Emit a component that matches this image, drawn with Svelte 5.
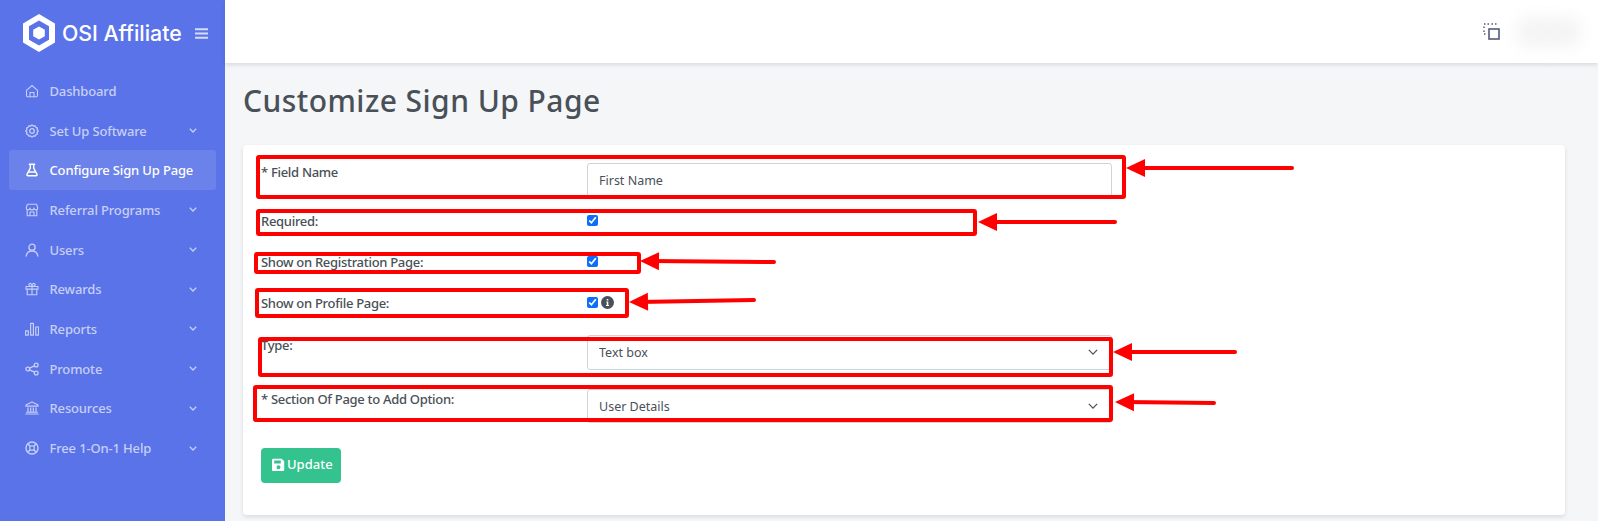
<script>
  const nav = [
    { label: "Dashboard", icon: "home" },
    { label: "Set Up Software", icon: "gear", more: true },
    { label: "Configure Sign Up Page", icon: "flask", active: true },
    { label: "Referral Programs", icon: "store", more: true },
    { label: "Users", icon: "user", more: true },
    { label: "Rewards", icon: "gift", more: true },
    { label: "Reports", icon: "bars", more: true },
    { label: "Promote", icon: "share", more: true },
    { label: "Resources", icon: "bank", more: true },
    { label: "Free 1-On-1 Help", icon: "help", more: true },
  ];

  // hand-placed annotations from the screenshot: x, y, w, h
  const boxes = [
    [258, 157, 866, 40],
    [258, 211, 717, 23],
    [256, 254, 383, 18],
    [257, 290, 370, 26],
    [260, 339, 851, 36],
    [255, 387, 856, 33],
  ];
  // tail x, tail y, tip x, tip y
  const arrows = [
    [1292, 168, 1126, 168],
    [1115, 222, 978, 222],
    [774, 262, 640, 261],
    [754, 300, 629, 302],
    [1235, 352, 1113, 352],
    [1214, 403, 1115, 402],
  ];

  function arrowHead([x1, y1, x2, y2]) {
    const len = Math.hypot(x2 - x1, y2 - y1);
    const ux = (x1 - x2) / len;
    const uy = (y1 - y2) / len;
    const bx = x2 + ux * 19;
    const by = y2 + uy * 19;
    return `${x2},${y2} ${bx - uy * 9},${by + ux * 9} ${bx + uy * 9},${by - ux * 9}`;
  }
</script>

<div class="layout">
  <aside class="sidebar">
    <div class="brand">
      <svg class="logo" viewBox="0 0 32 38" width="32" height="38">
        <path fill-rule="evenodd" d="M16 0 32 9.500v19L16 38 0 28.500v-19zM16 6.500 6 12.300v13.400l10 5.800 10-5.800V12.300z" fill="#fff" />
        <path d="M16 12.500l5.800 3.300v6.400L16 25.500l-5.800-3.300v-6.400z" fill="#fff" />
      </svg>
      <span class="brand-name">OSI Affiliate</span>
      <svg class="burger" viewBox="0 0 13 11" width="13" height="11">
        <path d="M0 1.200h13M0 5.500h13M0 9.800h13" stroke="#d5dcfa" stroke-width="2" />
      </svg>
    </div>
    <nav>
      {#each nav as item}
        <div class="nav-item" class:active={item.active}>
          <svg class="nav-icon" viewBox="0 0 14 14" width="14" height="14" fill="none" stroke="currentColor" stroke-width="1.100" stroke-linejoin="round" stroke-linecap="round">
            {#if item.icon === "home"}
              <path d="M1.500 6.300 7 1.500l5.500 4.800v5.200a1.200 1.200 0 0 1-1.200 1.200H2.700a1.200 1.200 0 0 1-1.200-1.200z" />
              <path d="M5 12.700V8.500h4v4.200" />
            {:else if item.icon === "gear"}
              <path d="M7 1l1.400 1 1.700-.2.800 1.500 1.500.8-.2 1.700 1 1.200-1 1.200.2 1.700-1.500.8-.8 1.500-1.700-.2L7 13l-1.400-1-1.700.2-.8-1.500-1.500-.8.2-1.700L.8 7l1-1.200-.2-1.700 1.500-.8.8-1.500 1.700.2z" stroke-width="1.300" />
              <circle cx="7" cy="7" r="2.300" stroke-width="1.300" />
            {:else if item.icon === "flask"}
              <path d="M4.300 1.200h5.400M5.300 1.200v4L2 11.400a1 1 0 0 0 .9 1.400h8.200a1 1 0 0 0 .9-1.400L8.700 5.200v-4" stroke-width="1.400" />
              <path d="M3.600 9h6.800" stroke-width="1.400" />
            {:else if item.icon === "store"}
              <path d="M1.200 5 2.300 1.300h9.400L12.800 5a1.900 1.900 0 0 1-3.800 0 2 2 0 0 1-4 0A1.900 1.900 0 0 1 1.200 5z" />
              <path d="M2.200 6.800v6h9.600v-6M5 12.800V9h4v3.800" />
            {:else if item.icon === "user"}
              <circle cx="7" cy="4.300" r="3.100" stroke-width="1.300" />
              <path d="M1.200 13c.4-3 2.800-5 5.800-5s5.400 2 5.800 5" stroke-width="1.300" />
            {:else if item.icon === "gift"}
              <path d="M1 4.500h12v2.600H1zM2.200 7.100v5.700h9.600V7.100M7 4.500v8.300" />
              <path d="M7 4.500C5.500 4.500 3.800 3.800 3.800 2.500 3.800 1.500 5 1 5.800 1.500 6.600 2 7 3.500 7 4.500c0-1 .4-2.500 1.200-3 .8-.5 2 0 2 1 0 1.300-1.700 2-3.200 2z" />
            {:else if item.icon === "bars"}
              <path d="M.5 8.800h2.800v4.300H.5zM5.600 1.300h2.800v11.800H5.600zM10.700 5h2.800v8.100h-2.800z" stroke-width="1.200" />
            {:else if item.icon === "share"}
              <circle cx="2.800" cy="7" r="1.900" stroke-width="1.300" />
              <circle cx="11.200" cy="3" r="1.900" stroke-width="1.300" />
              <circle cx="11.200" cy="11" r="1.900" stroke-width="1.300" />
              <path d="M4.500 6.200l5-2.400M4.500 7.800l5 2.400" stroke-width="1.300" />
            {:else if item.icon === "bank"}
              <path d="M7 1 13 4v1.200H1V4zM.8 13h12.400M1.800 11.200h10.400M3 6.800v3M5.700 6.800v3M8.300 6.800v3M11 6.800v3" stroke-width="1.200" />
            {:else}
              <circle cx="7" cy="7" r="6" stroke-width="1.400" />
              <circle cx="7" cy="7" r="2.300" />
              <path d="M3 3l2.300 2.300M11 3 8.700 5.300M3 11l2.300-2.300M11 11 8.700 8.700" stroke-width="1.400" />
            {/if}
          </svg>
          <span class="nav-label">{item.label}</span>
          {#if item.more}
            <svg class="chev" viewBox="0 0 8 5" width="8" height="5" fill="none" stroke="currentColor" stroke-width="1.300">
              <path d="M.8.800 4 4 7.200.800" />
            </svg>
          {/if}
        </div>
      {/each}
    </nav>
  </aside>

  <div class="main">
    <header class="topbar">
      <svg class="full" viewBox="0 0 17 17" width="17" height="17" fill="none" stroke="#555b78">
        <path d="M1 1h1.500M4.500 1H6M8.500 1H10M12 1h1.500M1 3.500V5M1 7.500V9M1 11h1.500" stroke-width="1.400" />
        <rect x="6" y="6" width="10" height="10" stroke-width="1.600" />
      </svg>
      <div class="blur"></div>
    </header>

    <div class="content">
      <h1>Customize Sign Up Page</h1>
      <form class="card">
        <div class="row r1">
          <label for="f-name">* Field Name</label>
          <input id="f-name" class="control" type="text" value="First Name" />
        </div>
        <div class="row r2">
          <label for="f-req">Required:</label>
          <div class="checks"><input id="f-req" type="checkbox" checked /></div>
        </div>
        <div class="row r3">
          <label for="f-reg">Show on Registration Page:</label>
          <div class="checks"><input id="f-reg" type="checkbox" checked /></div>
        </div>
        <div class="row r4">
          <label for="f-pro">Show on Profile Page:</label>
          <div class="checks">
            <input id="f-pro" type="checkbox" checked />
            <svg class="info" viewBox="0 0 13 13" width="13" height="13">
              <circle cx="6.500" cy="6.500" r="6.500" fill="#495057" />
              <path d="M5.300 5.600h2v3.300h.8v1H5v-1h.8V6.600h-.5zM5.700 2.900h1.600v1.600H5.700z" fill="#fff" />
            </svg>
          </div>
        </div>
        <div class="row r5">
          <label for="f-type">Type:</label>
          <div class="select-wrap">
            <select id="f-type" class="control tall"><option>Text box</option></select>
            <svg viewBox="0 0 12 7" width="10" height="6" fill="none" stroke="#495057" stroke-width="1.500"><path d="M1 1l5 5 5-5" /></svg>
          </div>
        </div>
        <div class="row r6">
          <label for="f-sec">* Section Of Page to Add Option:</label>
          <div class="select-wrap">
            <select id="f-sec" class="control"><option>User Details</option></select>
            <svg viewBox="0 0 12 7" width="10" height="6" fill="none" stroke="#495057" stroke-width="1.500"><path d="M1 1l5 5 5-5" /></svg>
          </div>
        </div>
        <button type="button" class="save">
          <svg viewBox="0 0 13 13" width="13" height="13">
            <path fill-rule="evenodd" d="M1.400.800h8.300l2.500 2.500v8.500a1.400 1.400 0 0 1-1.400 1.400H1.400A1.400 1.400 0 0 1 0 11.800V2.200A1.400 1.400 0 0 1 1.400.800zM2.200 2.600v2.800h6.600V2.600zM6.500 7.300a2 2 0 1 0 0 4 2 2 0 0 0 0-4z" fill="#fff" />
          </svg>
          Update
        </button>
      </form>
    </div>
  </div>

  <svg class="marks" viewBox="0 0 1598 521" width="1598" height="521">
    {#each boxes as [x, y, w, h]}
      <rect {x} {y} width={w} height={h} rx="1" fill="none" stroke="#ff0000" stroke-width="4" />
    {/each}
    {#each arrows as a}
      <line x1={a[0]} y1={a[1]} x2={a[2] + 10} y2={a[3]} stroke="#ff0000" stroke-width="4" stroke-linecap="round" />
      <polygon points={arrowHead(a)} fill="#ff0000" />
    {/each}
  </svg>
</div>

<style>
  :global(body) {
    margin: 0;
    background: #f5f6f8;
    font-family: "Noto Sans", sans-serif;
    color: #495057;
  }

  .layout {
    position: relative;
    display: flex;
    height: 521px;
    overflow: hidden;
  }

  .sidebar {
    flex: 0 0 225px;
    background: #5b73e8;
  }

  .brand {
    display: flex;
    align-items: center;
    height: 66px;
    padding-left: 23px;
  }

  .logo {
    flex: none;
  }

  .brand-name {
    margin-left: 7px;
    font-family: "Inter", sans-serif;
    font-size: 21.300px;
    font-weight: 500;
    color: #fff;
    white-space: nowrap;
  }

  .burger {
    margin-left: 13px;
  }

  nav {
    padding: 5px 9px 0;
  }

  .nav-item {
    display: flex;
    align-items: center;
    height: 39.700px;
    padding: 0 17px;
    border-radius: 3px;
    font-size: 13px;
    font-weight: 500;
    letter-spacing: -0.15px;
    color: #c6cff6;
    box-sizing: border-box;
  }

  .nav-item.active {
    background: #6b82ea;
    color: #fff;
  }

  .nav-icon {
    flex: none;
    margin-left: -1px;
  }

  .nav-label {
    margin-left: 10.500px;
    white-space: nowrap;
    flex: 1;
  }

  .chev {
    margin-right: 2px;
  }

  .main {
    flex: 1;
    min-width: 0;
  }

  .topbar {
    display: flex;
    align-items: center;
    justify-content: flex-end;
    height: 63px;
    padding-right: 18px;
    background: #fff;
    box-shadow: 0 2px 4px rgba(15, 34, 58, 0.12);
  }

  .full {
    margin-right: 18px;
    margin-top: -1px;
  }

  .blur {
    width: 62px;
    height: 30px;
    border-radius: 8px;
    background: #f4f4f5;
    filter: blur(8px);
  }

  .content {
    padding: 0 33px 0 18px;
  }

  h1 {
    margin: 0;
    padding: 18px 0 0;
    height: 82px;
    box-sizing: border-box;
    font-size: 30px;
    line-height: 40px;
    font-weight: 500;
    color: #495057;
    letter-spacing: 0.45px;
  }

  .card {
    height: 370px;
    box-sizing: border-box;
    padding: 18px 0 0 18px;
    background: #fff;
    border-radius: 4px;
    box-shadow: 0 2px 4px rgba(15, 34, 58, 0.12);
  }

  .row {
    display: grid;
    grid-template-columns: 326px 525px;
    font-size: 13px;
    line-height: 20px;
  }

  .r1 label {
    margin-top: -1px;
  }

  .r2 { margin-top: 14px; }
  .r3,
  .r4 { margin-top: 21px; }
  .r5 { margin-top: 22px; }
  .r6 { margin-top: 19px; }

  label {
    font-weight: 500;
    letter-spacing: -0.3px;
    color: #495057;
  }

  .control {
    display: block;
    width: 100%;
    height: 34px;
    box-sizing: border-box;
    margin: 0;
    padding: 0 11px;
    border: 1px solid #ced4da;
    border-radius: 3px;
    background: #fff;
    font: 400 12.500px "Noto Sans", sans-serif;
    color: #495057;
    appearance: none;
  }

  .tall {
    height: 35px;
  }

  .checks {
    display: flex;
    align-items: center;
    height: 18px;
    gap: 3px;
  }

  .checks input {
    width: 11px;
    height: 11px;
    margin: 0;
    accent-color: #0d6efd;
  }

  .select-wrap {
    position: relative;
  }

  .select-wrap svg {
    position: absolute;
    right: 14px;
    top: 14px;
  }

  .save {
    display: flex;
    align-items: center;
    gap: 2px;
    margin-top: 25px;
    width: 80px;
    height: 35px;
    padding: 0 0 3px 11px;
    border: none;
    border-radius: 4px;
    background: #34c38f;
    color: #fff;
    font: 500 13px "Noto Sans", sans-serif;
  }

  .marks {
    position: absolute;
    left: 0;
    top: 0;
    pointer-events: none;
  }
</style>
